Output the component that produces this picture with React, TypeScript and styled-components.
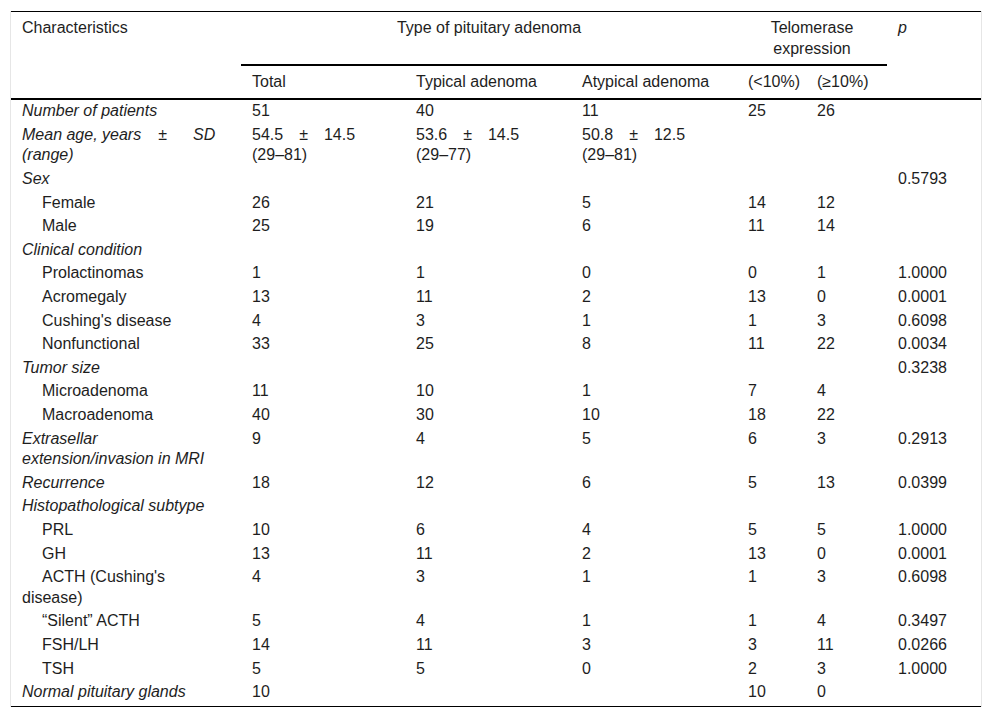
import * as React from 'react'
import styled, { createGlobalStyle } from 'styled-components'

const GlobalStyle = createGlobalStyle`
  html, body {
    margin: 0;
    padding: 0;
    background: #fff;
  }
  body {
    font-family: 'Liberation Sans', Arial, sans-serif;
    color: #1e1e1e;
  }
`

const Page = styled.div`
  padding: 11px 10px 0;
`

const Frame = styled.div`
  border-left: 1px solid #e6e6e6;
  border-right: 1px solid #e6e6e6;
`

const Table = styled.table`
  width: 100%;
  border-collapse: collapse;
  table-layout: fixed;
  border-top: 1px solid #000;
  border-bottom: 1px solid #000;
  font-size: 16px;
`

const Col = styled.col<{ $w: number }>`
  width: ${(p) => p.$w}px;
`

const HeadCell = styled.th<{ $center?: boolean; $rule?: boolean }>`
  font-weight: normal;
  text-align: ${(p) => (p.$center ? 'center' : 'left')};
  vertical-align: top;
  line-height: 20.6px;
  padding: 6px 11px 5px;
  border-bottom: ${(p) => (p.$rule ? '2px solid #000' : 'none')};
`

const Cell = styled.td<{ $italic?: boolean; $indent?: boolean }>`
  vertical-align: top;
  text-align: left;
  line-height: 20.6px;
  padding: 1.5px 11px;
  font-style: ${(p) => (p.$italic ? 'italic' : 'normal')};
  text-indent: ${(p) => (p.$indent ? '20px' : '0')};
`

const LastCell = styled(Cell)`
  padding-bottom: 3px;
`

const Gap = styled.span<{ $w: number }>`
  display: inline-block;
  width: ${(p) => p.$w}px;
`

const Upright = styled.span`
  font-style: normal;
`

type Row = {
  label: React.ReactNode
  italic?: boolean
  indent?: boolean
  values: string[]
}

const rows: Row[] = [
  { label: 'Sex', italic: true, values: ['', '', '', '', '', '0.5793'] },
  { label: 'Female', indent: true, values: ['26', '21', '5', '14', '12', ''] },
  { label: 'Male', indent: true, values: ['25', '19', '6', '11', '14', ''] },
  { label: 'Clinical condition', italic: true, values: ['', '', '', '', '', ''] },
  { label: 'Prolactinomas', indent: true, values: ['1', '1', '0', '0', '1', '1.0000'] },
  { label: 'Acromegaly', indent: true, values: ['13', '11', '2', '13', '0', '0.0001'] },
  { label: "Cushing's disease", indent: true, values: ['4', '3', '1', '1', '3', '0.6098'] },
  { label: 'Nonfunctional', indent: true, values: ['33', '25', '8', '11', '22', '0.0034'] },
  { label: 'Tumor size', italic: true, values: ['', '', '', '', '', '0.3238'] },
  { label: 'Microadenoma', indent: true, values: ['11', '10', '1', '7', '4', ''] },
  { label: 'Macroadenoma', indent: true, values: ['40', '30', '10', '18', '22', ''] },
  {
    label: 'Extrasellar extension/invasion in MRI',
    italic: true,
    values: ['9', '4', '5', '6', '3', '0.2913'],
  },
  { label: 'Recurrence', italic: true, values: ['18', '12', '6', '5', '13', '0.0399'] },
  { label: 'Histopathological subtype', italic: true, values: ['', '', '', '', '', ''] },
  { label: 'PRL', indent: true, values: ['10', '6', '4', '5', '5', '1.0000'] },
  { label: 'GH', indent: true, values: ['13', '11', '2', '13', '0', '0.0001'] },
  {
    label: (
      <>
        ACTH (Cushing's
        <br />
        disease)
      </>
    ),
    indent: true,
    values: ['4', '3', '1', '1', '3', '0.6098'],
  },
  { label: '\u201cSilent\u201d ACTH', indent: true, values: ['5', '4', '1', '1', '4', '0.3497'] },
  { label: 'FSH/LH', indent: true, values: ['14', '11', '3', '3', '11', '0.0266'] },
  { label: 'TSH', indent: true, values: ['5', '5', '0', '2', '3', '1.0000'] },
]

const lastRow: Row = {
  label: 'Normal pituitary glands',
  italic: true,
  values: ['10', '', '', '10', '0', ''],
}

const ageRows = [
  { mean: '54.5', sd: '14.5', range: '(29\u201381)' },
  { mean: '53.6', sd: '14.5', range: '(29\u201377)' },
  { mean: '50.8', sd: '12.5', range: '(29\u201381)' },
]

const widths = [230, 164, 166, 166, 69, 81, 94]

const App = () => {
  return (
    <Page>
      <GlobalStyle />
      <Frame>
        <Table>
          <colgroup>
            {widths.map((w, i) => (
              <Col key={i} $w={w} />
            ))}
          </colgroup>
          <thead>
            <tr>
              <HeadCell rowSpan={2} $rule>
                Characteristics
              </HeadCell>
              <HeadCell colSpan={3} $center $rule>
                Type of pituitary adenoma
              </HeadCell>
              <HeadCell colSpan={2} $center $rule>
                Telomerase expression
              </HeadCell>
              <HeadCell rowSpan={2} $rule>
                <i>p</i>
              </HeadCell>
            </tr>
            <tr>
              <HeadCell $rule>Total</HeadCell>
              <HeadCell $rule>Typical adenoma</HeadCell>
              <HeadCell $rule>Atypical adenoma</HeadCell>
              <HeadCell $rule>(&lt;10%)</HeadCell>
              <HeadCell $rule>(≥10%)</HeadCell>
            </tr>
          </thead>
          <tbody>
            <tr>
              <Cell $italic>Number of patients</Cell>
              <Cell>51</Cell>
              <Cell>40</Cell>
              <Cell>11</Cell>
              <Cell>25</Cell>
              <Cell>26</Cell>
              <Cell />
            </tr>
            <tr>
              <Cell $italic>
                Mean age, years
                <Gap $w={17} />
                <Upright>±</Upright>
                <Gap $w={26} />
                SD
                <br />
                (range)
              </Cell>
              {ageRows.map((a, i) => (
                <Cell key={i}>
                  {a.mean}
                  <Gap $w={16} />±<Gap $w={16} />
                  {a.sd}
                  <br />
                  {a.range}
                </Cell>
              ))}
              <Cell />
              <Cell />
              <Cell />
            </tr>
            {rows.map((r, idx) => (
              <tr key={idx}>
                <Cell $italic={r.italic} $indent={r.indent}>
                  {r.label}
                </Cell>
                {r.values.map((v, i) => (
                  <Cell key={i}>{v}</Cell>
                ))}
              </tr>
            ))}
            <tr>
              <LastCell $italic={lastRow.italic}>{lastRow.label}</LastCell>
              {lastRow.values.map((v, i) => (
                <LastCell key={i}>{v}</LastCell>
              ))}
            </tr>
          </tbody>
        </Table>
      </Frame>
    </Page>
  )
}

export default App
